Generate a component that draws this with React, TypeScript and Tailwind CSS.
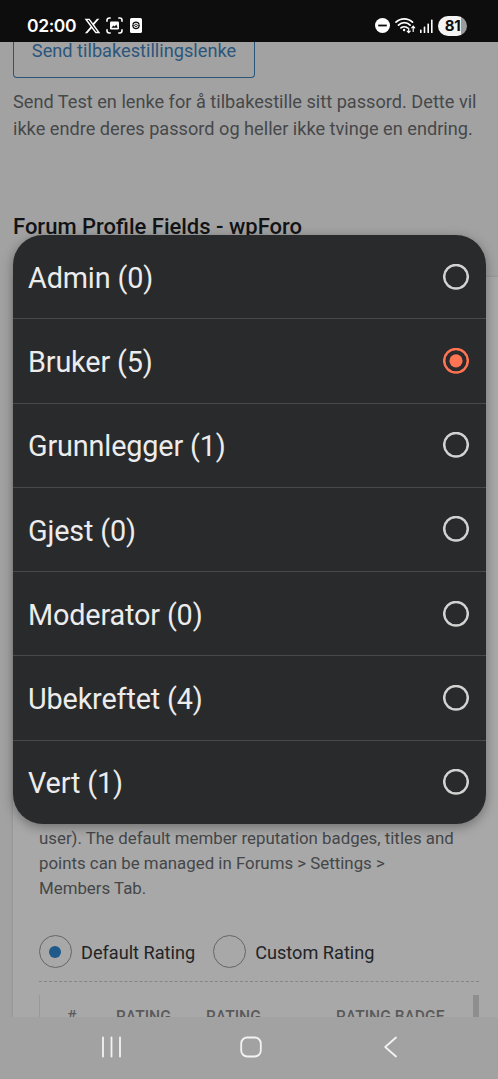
import React from "react";

const roles = [
  { name: "Admin", count: 0 },
  { name: "Bruker", count: 5 },
  { name: "Grunnlegger", count: 1 },
  { name: "Gjest", count: 0 },
  { name: "Moderator", count: 0 },
  { name: "Ubekreftet", count: 4 },
  { name: "Vert", count: 1 },
];

function StatusBar() {
  return (
    <div className="flex h-[42px] shrink-0 items-center bg-[#0d0d0d] pt-[9px] pl-[27px] pr-[31px] text-white">
      <span className="w-[50px] whitespace-nowrap font-['Inter'] text-[17.5px] leading-none font-semibold tracking-[-0.4px]">02:00</span>
      <svg className="ml-[7px]" width="17" height="16" viewBox="0.6 0 23 22" fill="currentColor">
        <path d="M18.24 1h3.31l-7.23 8.26L22.8 21h-6.66l-5.2-6.8L4.97 21H1.66l7.73-8.83L1.25 1h6.83l4.71 6.23zm-1.16 18h1.83L7.08 2.9H5.12z" />
      </svg>
      <svg className="ml-[5px]" width="17" height="17" viewBox="0 0 17 17" fill="none" stroke="currentColor" strokeWidth="1.6" strokeLinecap="round">
        <path d="M1 4.2V3.2A2.2 2.2 0 0 1 3.2 1h1M12.8 1h1A2.2 2.2 0 0 1 16 3.2v1M16 12.8v1a2.2 2.2 0 0 1-2.2 2.2h-1M4.2 16h-1A2.2 2.2 0 0 1 1 13.8v-1" />
        <rect x="4" y="4.5" width="9" height="8" rx="1.2" fill="currentColor" stroke="none" />
        <path d="M5.4 10.8 7.4 8.6l1.4 1 1.5-2 1.4 3.2z" fill="#0d0d0d" stroke="none" />
      </svg>
      <svg className="ml-[7px]" width="12" height="15" viewBox="0 0 12 15">
        <rect width="12" height="15" rx="1.6" fill="currentColor" />
        <path d="M2.8 6.6a3.3 3.3 0 0 1 6.4 0M2.8 8.2a3.3 3.3 0 0 0 6.4 0" fill="none" stroke="#0d0d0d" strokeWidth="1.3" />
        <path d="M2 7.4h2.4M7.6 7.4H10" stroke="#0d0d0d" strokeWidth="0.9" />
        <circle cx="6" cy="7.4" r="1.3" fill="none" stroke="#0d0d0d" strokeWidth="0.8" />
      </svg>
      <svg className="ml-auto" width="15" height="15" viewBox="0 0 15 15">
        <circle cx="7.5" cy="7.5" r="7.5" fill="currentColor" />
        <path d="M3.2 7.5h8.6" stroke="#0d0d0d" strokeWidth="1.8" />
      </svg>
      <svg className="ml-[5px]" width="21" height="17" viewBox="0 0 21 17" fill="none" stroke="currentColor" strokeWidth="1.7" strokeLinecap="round">
        <path d="M1 5.2c4.5-4.5 12-4.5 16.5 0M3.5 8.1c3.3-3.2 8.4-3.2 11.6 0M6 10.9c1.7-1.5 4.6-1.5 6.4 0" />
        <circle cx="9.1" cy="13" r="1.2" fill="currentColor" stroke="none" />
        <path d="M13.7 11v4.5M12.2 14.1l1.5 1.6 1.5-1.6M18.2 14.5v-5M16.7 10.8l1.5-1.6 1.5 1.6" strokeWidth="1.2" />
      </svg>
      <svg className="ml-[4px]" width="13" height="14" viewBox="0 0 13 14" fill="currentColor">
        <rect x="0" y="10.5" width="1.6" height="3.5" rx=".6" />
        <rect x="3.7" y="7.5" width="1.6" height="6.5" rx=".6" />
        <rect x="7.4" y="4.5" width="1.6" height="9.5" rx=".6" />
        <rect x="11" y="0.5" width="1.6" height="13.5" rx=".6" />
      </svg>
      <div className="ml-[5px] flex h-5 w-[29px] items-center justify-center rounded-full bg-[linear-gradient(90deg,#f4f4f4_81%,#9b9b9b_81%)] font-['Inter'] text-[15px] leading-none font-bold tracking-[-0.3px] text-[#0d0d0d]">81</div>
    </div>
  );
}

function RatingOption({ label, checked }: { label: string; checked?: boolean }) {
  return (
    <div className="flex items-center">
      <span className="flex size-[33px] items-center justify-center rounded-full border border-[#666]">
        {checked && <span className="mr-px size-3 rounded-full bg-[#1f5a8a]" />}
      </span>
      <span className="ml-[9px] pt-[2px] whitespace-nowrap text-[18.15px] text-[#222426]">{label}</span>
    </div>
  );
}

function ProfilePage() {
  return (
    <div className="flex min-h-0 flex-1 flex-col overflow-hidden">
      <div className="ml-[13px] flex h-[36px] w-[242px] shrink-0 justify-center rounded-b-[4px] border border-t-0 border-[#2b567c] text-[18.2px] leading-[18px] whitespace-nowrap text-[#2b567c]">
        Send tilbakestillingslenke
      </div>
      <p className="mt-[10px] ml-[13px] shrink-0 text-[18.16px] leading-[27px] whitespace-nowrap text-[#46484a]">
        Send Test en lenke for å tilbakestille sitt passord. Dette vil<br />
        ikke endre deres passord og heller ikke tvinge en endring.
      </p>
      <h2 className="mt-[70px] ml-[13px] h-[30px] shrink-0 text-[22px] leading-[30px] font-medium whitespace-nowrap text-[#111315]">Forum Profile Fields - wpForo</h2>
      <div className="mt-[35px] ml-[13px] flex min-h-0 flex-1 flex-col bg-[#a8a8a8] pt-[549px] pr-[19px] pl-[26px] shadow-[0_0_3px_rgba(0,0,0,0.14)]">
        <p className="shrink-0 text-[16.85px] leading-[25px] whitespace-nowrap text-[#444648]">
          user). The default member reputation badges, titles and<br />
          points can be managed in Forums &gt; Settings &gt;<br />
          Members Tab.
        </p>
        <div className="mt-[34px] flex shrink-0 gap-[18px]">
          <RatingOption label="Default Rating" checked />
          <RatingOption label="Custom Rating" />
        </div>
        <div className="mt-[13px] shrink-0 border-t border-dashed border-[#858585]" />
        <div className="mt-[13px] flex h-[40px] shrink-0 justify-between border-l border-[#989898] text-[15.6px] leading-none font-medium text-[#5a5a5a]">
          <div className="flex pt-[15px] pl-[27px] whitespace-nowrap">
            <span className="w-[49px]">#</span>
            <span className="w-[90px]">RATING</span>
            <span className="w-[130px]">RATING</span>
            <span>RATING BADGE</span>
          </div>
          <div className="w-[6px] shrink-0 bg-[#8e8e8e]" />
        </div>
      </div>
    </div>
  );
}

function NavBar() {
  return (
    <div className="relative z-10 flex h-[62px] shrink-0 items-start bg-[#a2a2a2] pt-[19px] pl-[101px] text-[#f3f3f3]">
      <svg width="21" height="22" viewBox="0 0 21 22" stroke="currentColor" strokeWidth="1.8" strokeLinecap="round">
        <path d="M2 1.5v19M10.5 1.5v19M19 1.5v19" />
      </svg>
      <svg className="ml-[118px]" width="22" height="22" viewBox="0 0 22 22" fill="none" stroke="currentColor" strokeWidth="1.8">
        <rect x="1.2" y="1.5" width="19.6" height="19" rx="6" />
      </svg>
      <svg className="ml-[121px]" width="15" height="22" viewBox="0 0 15 22" fill="none" stroke="currentColor" strokeWidth="1.8" strokeLinecap="round" strokeLinejoin="round">
        <path d="M13 1.5 2.2 11 13 20.5" />
      </svg>
    </div>
  );
}

function Radio({ checked }: { checked: boolean }) {
  return (
    <svg className={checked ? "text-[#ff7452]" : "text-[#d2d2d2]"} width="26" height="26" viewBox="0 0 26 26">
      <circle cx="13" cy="12.8" r="11.8" fill="none" stroke="currentColor" strokeWidth="2.5" />
      {checked && <circle cx="13" cy="12.8" r="6.6" fill="currentColor" />}
    </svg>
  );
}

function RoleSheet({ selected }: { selected: string }) {
  return (
    <div className="absolute top-[235px] left-[12.5px] z-20 flex h-[589px] w-[473px] flex-col overflow-hidden rounded-[30px] bg-[#292a2c] shadow-[0_3px_12px_rgba(0,0,0,0.35)]">
      {roles.map((role) => (
        <div key={role.name} className="flex flex-1 items-center justify-between border-b border-[#48494b] pr-[17px] pl-[15.5px] last:border-b-0">
          <span className="pt-[3px] text-[28.8px] leading-none tracking-[-0.15px] whitespace-nowrap text-[#ececec]">{role.name} ({role.count})</span>
          <Radio checked={role.name === selected} />
        </div>
      ))}
    </div>
  );
}

export default function App() {
  return (
    <div className="relative flex h-[1079px] w-[498px] flex-col overflow-hidden bg-[#a2a2a2] font-['Roboto',sans-serif]">
      <StatusBar />
      <ProfilePage />
      <NavBar />
      <RoleSheet selected="Bruker" />
    </div>
  );
}
